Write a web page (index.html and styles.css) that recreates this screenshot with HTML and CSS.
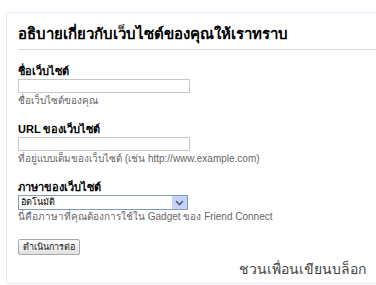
FILE: index.html
```html
<!DOCTYPE html>
<html lang="th">
<head>
    <meta charset="UTF-8">
    <title>อธิบายเกี่ยวกับเว็บไซต์ของคุณให้เราทราบ</title>
    <link rel="stylesheet" href="styles.css">
</head>
<body>
    <div class="panel">
        <h2 class="title">อธิบายเกี่ยวกับเว็บไซต์ของคุณให้เราทราบ</h2>
        <form class="site-form">
            <div class="field">
                <label for="site-name">ชื่อเว็บไซต์</label>
                <input type="text" id="site-name">
                <div class="hint">ชื่อเว็บไซต์ของคุณ</div>
            </div>
            <div class="field">
                <label for="site-url">URL ของเว็บไซต์</label>
                <input type="text" id="site-url">
                <div class="hint">ที่อยู่แบบเต็มของเว็บไซต์ (เช่น http://www.example.com)</div>
            </div>
            <div class="field">
                <label for="site-lang">ภาษาของเว็บไซต์</label>
                <div class="select">
                    <span class="select-value">อัตโนมัติ</span>
                    <span class="select-arrow">
                        <svg width="9" height="6" viewBox="0 0 9 6"><path d="M1 1 L4.5 4.5 L8 1" fill="none" stroke="#4d6185" stroke-width="1.6"/></svg>
                    </span>
                </div>
                <div class="hint">นี่คือภาษาที่คุณต้องการใช้ใน Gadget ของ Friend Connect</div>
            </div>
            <button type="button" class="btn">ดำเนินการต่อ</button>
        </form>
        <div class="invite">ชวนเพื่อนเขียนบล็อก</div>
    </div>
</body>
</html>
```
FILE: styles.css
```css
body {
    margin: 0;
    padding: 12px 0 0 6px;
    font-family: Tahoma, "Liberation Sans", Arial, sans-serif;
    font-size: 11px;
    color: #000;
    background: #fff;
    overflow: hidden;
}
.panel {
    border: 1px solid #e3edf9;
    border-right: none;
    padding: 12px 0 0 11px;
    height: 272px;
    box-sizing: border-box;
}
.title {
    font-size: 15px;
    font-weight: bold;
    margin: 0;
    padding: 0 0 6px 0;
    border-bottom: 1px solid #d8d8d8;
    line-height: 18px;
}
.site-form {
    padding-top: 15px;
}
.field {
    margin-bottom: 16px;
}
label {
    display: block;
    font-weight: bold;
    line-height: 12px;
    margin-bottom: 2px;
}
input[type="text"] {
    display: block;
    width: 172px;
    height: 14px;
    box-sizing: border-box;
    border: 1px solid #c8c8c8;
    margin: 0 0 2px 0;
    padding: 0;
}
.select {
    display: flex;
    justify-content: space-between;
    align-items: center;
    width: 170px;
    height: 15px;
    box-sizing: border-box;
    border: 1px solid #7f9db9;
    margin: 0 0 1px 0;
    font-size: 9px;
    line-height: 13px;
}
.select-value {
    padding-left: 2px;
}
.select-arrow {
    display: flex;
    align-items: center;
    justify-content: center;
    width: 15px;
    height: 13px;
    background: #c6d3f7;
}
.hint {
    color: #666;
    font-size: 10px;
    line-height: 12px;
}
.btn {
    display: block;
    font-family: inherit;
    font-size: 9px;
    line-height: 14px;
    height: 16px;
    padding: 0 4px;
    border: 1px solid #aaa;
    border-radius: 2px;
    background: linear-gradient(#fff, #e0e0e0);
    color: #222;
    margin-top: 3px;
}
.invite {
    text-align: right;
    font-size: 14px;
    line-height: 18px;
    color: #444;
    padding-right: 10px;
    margin-top: 5px;
}
```
